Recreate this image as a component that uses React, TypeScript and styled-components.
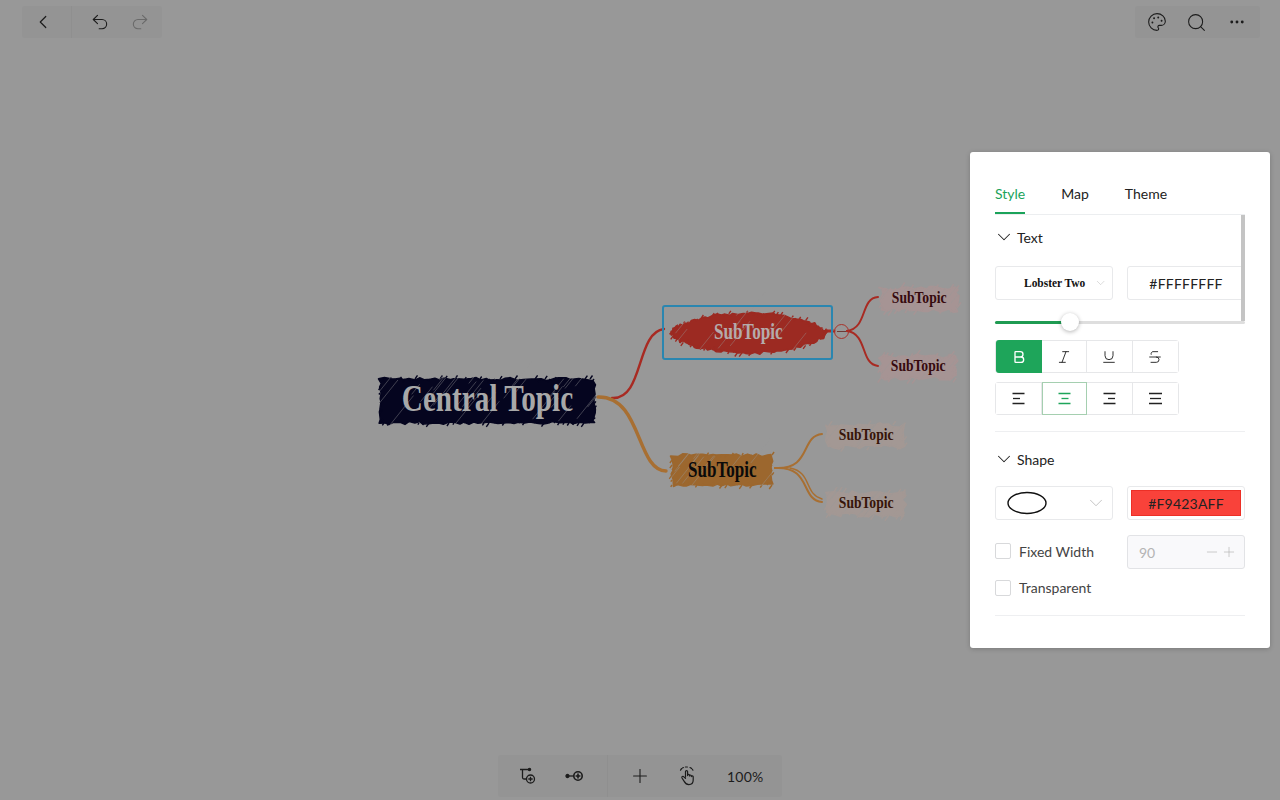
import { ReactNode } from "react";
import styled, { createGlobalStyle } from "styled-components";
import { ChevronDown, ChevronLeft, Ellipsis, Minus, Palette, Plus, Redo2, Search, Undo2, Bold, Italic, Underline, Strikethrough } from "lucide-react";

const GlobalStyle = createGlobalStyle`
  html, body { margin: 0; padding: 0; }
  body { font-family: "Lato", "Liberation Sans", sans-serif; color: #1c1c1c; }
`;

//#region canvas + bars
const Page = styled.div`
  position: relative;
  width: 1280px;
  height: 800px;
  overflow: hidden;
  background: #989898;
  display: flex;
  flex-direction: column;
  justify-content: space-between;
`;

const TopRow = styled.div`
  display: flex;
  justify-content: space-between;
  padding: 6px 20px 0 22px;
`;

const Bar = styled.div`
  display: flex;
  align-items: center;
  height: 32px;
  background: #949494;
  border-radius: 3px;
`;

const BarButton = styled.div<{ $w?: number; $dim?: boolean; $shift?: number }>`
  display: flex;
  align-items: center;
  justify-content: center;
  width: ${(p) => p.$w ?? 40}px;
  height: 100%;
  box-sizing: border-box;
  padding-right: ${(p) => p.$shift ?? 0}px;
  color: ${(p) => (p.$dim ? "#6a6a6a" : "#1c1c1c")};
`;

const BarSep = styled.div<{ $gap?: number }>`
  width: 1px;
  height: 100%;
  margin-left: ${(p) => p.$gap ?? 0}px;
  background: #8f8f8f;
`;

const BottomRow = styled.div`
  display: flex;
  justify-content: center;
  padding: 0 0 3px 0;
`;

const BottomBar = styled(Bar)`
  height: 42px;
  width: 284px;
  padding-left: 10px;
  box-sizing: border-box;
`;

const Zoom = styled.span`
  font-size: 14px;
  letter-spacing: 0.2px;
  color: #1c1c1c;
  margin-left: 23px;
`;
//#endregion

//#region map
const Links = styled.svg`
  position: absolute;
  left: 0;
  top: 0;
`;

const NodeBox = styled.div<{ $x: number; $y: number; $w: number; $h: number }>`
  position: absolute;
  left: ${(p) => p.$x}px;
  top: ${(p) => p.$y}px;
  width: ${(p) => p.$w}px;
  height: ${(p) => p.$h}px;
  display: flex;
  align-items: center;
  justify-content: center;
`;

const NodeFill = styled.svg`
  position: absolute;
  left: 0;
  top: 0;
  overflow: visible;
`;

const NodeLabel = styled.span<{ $size: number; $color: string; $lift: number; $squeeze: number }>`
  position: relative;
  top: ${(p) => p.$lift}px;
  transform: scaleX(${(p) => p.$squeeze});
  font-family: "Liberation Serif", serif;
  font-weight: 700;
  font-size: ${(p) => p.$size}px;
  color: ${(p) => p.$color};
  white-space: nowrap;
`;

const SelectBox = styled.div`
  position: absolute;
  left: 662px;
  top: 305px;
  width: 167px;
  height: 51px;
  border: 2px solid #2a86b0;
  border-radius: 3px;
`;

const Collapse = styled.div`
  position: absolute;
  left: 834px;
  top: 324px;
  width: 13px;
  height: 13px;
  border: 1px solid #a8322a;
  border-radius: 50%;
  display: flex;
  align-items: center;
  justify-content: center;
  &::after {
    content: "";
    width: 9px;
    height: 1px;
    background: #6e3a36;
  }
`;
//#endregion

//#region panel
const Panel = styled.div`
  position: absolute;
  left: 970px;
  top: 152px;
  width: 300px;
  height: 496px;
  box-sizing: border-box;
  background: #fff;
  border-radius: 3px;
  box-shadow: 0 1px 5px rgba(0, 0, 0, 0.2);
  padding: 29px 25px 0;
`;

const Tabs = styled.div`
  display: flex;
  gap: 36px;
  height: 33px;
  border-bottom: 1px solid #eceef0;
`;

const Tab = styled.div<{ $active?: boolean }>`
  font-size: 14px;
  line-height: 26px;
  height: 33px;
  box-sizing: border-box;
  color: ${(p) => (p.$active ? "#1ba35a" : "#222")};
  border-bottom: ${(p) => (p.$active ? "2px solid #1ba35a" : "none")};
`;

const Scroller = styled.div`
  position: relative;
  padding-top: 12px;
`;

const ScrollThumb = styled.div`
  position: absolute;
  right: 0;
  top: 0;
  width: 4px;
  height: 106px;
  background: #c4c4c4;
`;

const SectionHead = styled.div<{ $top?: number }>`
  display: flex;
  align-items: center;
  gap: 2px;
  height: 20px;
  margin: ${(p) => p.$top ?? 0}px 0 0 -2px;
  font-size: 14px;
  color: #222;
`;

const TwoCols = styled.div<{ $top: number }>`
  display: grid;
  grid-template-columns: 118px 118px;
  gap: 14px;
  align-items: center;
  margin-top: ${(p) => p.$top}px;
`;

const Field = styled.div<{ $off?: boolean }>`
  display: flex;
  align-items: center;
  justify-content: space-between;
  box-sizing: border-box;
  height: 34px;
  padding: 0 5px 0 11px;
  border: 1px solid ${(p) => (p.$off ? "#e2e3e6" : "#e8e9eb")};
  border-radius: 3px;
  background: ${(p) => (p.$off ? "#f9f9fb" : "#fff")};
  font-size: 14px;
  color: ${(p) => (p.$off ? "#b4b4b4" : "#222")};
`;

const FontName = styled.span`
  margin-left: 17px;
  font-family: "Liberation Serif", serif;
  font-weight: 700;
  font-size: 13px;
  color: #111;
  white-space: nowrap;
  transform: scaleX(0.88);
  transform-origin: left center;
`;

const ColorField = styled(Field)`
  justify-content: center;
  padding: 0;
  letter-spacing: 0.2px;
`;

const Swatch = styled.div<{ $color: string }>`
  display: flex;
  align-items: center;
  justify-content: center;
  width: 110px;
  height: 26px;
  box-sizing: border-box;
  background: ${(p) => p.$color};
  border: 1px solid #ec2f26;
  color: #222;
  letter-spacing: 0.2px;
`;

const Slider = styled.div`
  position: relative;
  height: 3px;
  margin-top: 21px;
  background: #dedede;
  border-radius: 2px;
`;

const SliderFill = styled.div`
  height: 100%;
  background: #1f9b52;
  border-radius: 2px;
`;

const SliderThumb = styled.div`
  position: absolute;
  top: -8px;
  width: 18px;
  height: 18px;
  margin-left: -9px;
  border-radius: 50%;
  background: #fff;
  box-shadow: 0 1px 4px rgba(0, 0, 0, 0.3);
`;

const BtnGroup = styled.div<{ $top: number }>`
  display: inline-flex;
  margin-top: ${(p) => p.$top}px;
  border: 1px solid #e6e7e9;
  border-radius: 3px;
  height: 31px;
  vertical-align: top;
`;

const GroupBtn = styled.div<{ $state?: "on" | "pick" }>`
  display: flex;
  align-items: center;
  justify-content: center;
  width: 45.5px;
  box-sizing: border-box;
  margin: ${(p) => (p.$state ? "-1px 0" : "0")};
  background: ${(p) => (p.$state === "on" ? "#1ea55a" : "#fff")};
  color: ${(p) => (p.$state === "on" ? "#fff" : p.$state === "pick" ? "#1ea55a" : "#222")};
  border: ${(p) => (p.$state === "pick" ? "1px solid #a5cfb0" : "none")};
  border-right: ${(p) => (p.$state === "on" ? "none" : p.$state === "pick" ? "1px solid #a5cfb0" : "1px solid #e6e7e9")};
  border-radius: ${(p) => (p.$state === "on" ? "3px 0 0 3px" : "0")};
  &:last-child {
    border-right: none;
  }
`;

const Stack = styled.div`
  display: flex;
  flex-direction: column;
  align-items: flex-start;
`;

const Divider = styled.div<{ $top: number }>`
  height: 1px;
  margin-top: ${(p) => p.$top}px;
  background: #eeeff1;
`;

const Check = styled.div<{ $top?: number }>`
  display: flex;
  align-items: center;
  gap: 8px;
  margin-top: ${(p) => p.$top ?? 0}px;
  font-size: 14px;
  color: #444;
`;

const Box = styled.div`
  width: 14px;
  height: 14px;
  border: 1px solid #d8d9db;
  border-radius: 2px;
`;

const Stepper = styled.div`
  display: flex;
  align-items: center;
  gap: 1px;
  padding-right: 2px;
  color: #b4b4b4;
`;
//#endregion

function rng(seed: number) {
  let s = seed;
  return () => {
    s = (s * 16807) % 2147483647;
    return s / 2147483647;
  };
}

// perimeter samples of the node, rect or blunt oval
function perimeter(w: number, h: number, oval: boolean) {
  const pts: [number, number][] = [];
  if (oval) {
    for (let i = 0; i < 110; i++) {
      const a = (i / 110) * Math.PI * 2;
      const sn = Math.sin(a);
      pts.push([w / 2 + Math.cos(a) * (w / 2 - 2), h / 2 + Math.sign(sn) * Math.pow(Math.abs(sn), 1.25) * (h / 2 - 1)]);
    }
    return pts;
  }
  const step = 5;
  for (let x = 3; x < w - 3; x += step) pts.push([x, 3]);
  for (let y = 3; y < h - 3; y += step) pts.push([w - 3, y]);
  for (let x = w - 3; x > 3; x -= step) pts.push([x, h - 3]);
  for (let y = h - 3; y > 3; y -= step) pts.push([3, y]);
  return pts;
}

function outline(w: number, h: number, oval: boolean, seed: number, rough: number) {
  const r = rng(seed);
  const pts = perimeter(w, h, oval).map(([x, y]) => `${(x + (r() - 0.5) * 3 * rough).toFixed(1)} ${(y + (r() - 0.5) * 3 * rough).toFixed(1)}`);
  return "M" + pts.join("L") + "Z";
}

// short pen strokes poking out past the edge, uneven on purpose
function fringe(w: number, h: number, oval: boolean, seed: number, rough: number) {
  const r = rng(seed + 3);
  let d = "";
  perimeter(w, h, oval).forEach(([x, y]) => {
    if (r() < 0.35) return;
    const len = (1.5 + r() * 2.5) * rough;
    const side = r() > 0.5 ? 1 : -1;
    d += `M${x.toFixed(1)} ${y.toFixed(1)}l${(side * len * 0.7).toFixed(1)} ${(-side * len).toFixed(1)}`;
  });
  return d;
}

function hatch(w: number, h: number, seed: number, n: number) {
  const r = rng(seed + 7);
  let d = "";
  for (let i = 0; i < n; i++) {
    const x = r() * w;
    const y = r() * h;
    const len = 8 + r() * 22;
    d += `M${x.toFixed(1)} ${y.toFixed(1)}l${(len * 0.8).toFixed(1)} ${(-len).toFixed(1)}`;
  }
  return d;
}

type NodeProps = {
  x: number;
  y: number;
  w: number;
  h: number;
  fill: string;
  color: string;
  size: number;
  seed: number;
  oval?: boolean;
  lines?: number;
  lift?: number;
  squeeze?: number;
  rough?: number;
  children: ReactNode;
};

function TopicNode({ x, y, w, h, fill, color, size, seed, oval, lines = 10, lift = 0, squeeze = 0.8, rough = 1, children }: NodeProps) {
  return (
    <NodeBox $x={x} $y={y} $w={w} $h={h}>
      <NodeFill width={w} height={h}>
        <path d={outline(w, h, !!oval, seed, rough)} fill={fill} stroke={fill} strokeWidth={1.5} strokeLinejoin="round" />
        <path d={fringe(w, h, !!oval, seed, rough)} stroke={fill} strokeWidth={1.4} fill="none" />
        <path d={hatch(w, h, seed, lines)} stroke="#989898" strokeOpacity={0.5} strokeWidth={0.8} fill="none" />
      </NodeFill>
      <NodeLabel $size={size} $color={color} $lift={lift} $squeeze={squeeze}>
        {children}
      </NodeLabel>
    </NodeBox>
  );
}

const Line = ({ d, color, w }: { d: string; color: string; w: number }) => <path d={d} stroke={color} strokeWidth={w} fill="none" strokeLinecap="round" />;

function BranchLinks() {
  const red = "#a82a22";
  const org = "#a86f32";
  return (
    <Links width={1280} height={800}>
      <Line d="M612 398C644 400 636 332 664 329" color={red} w={2.4} />
      <Line d="M598 397C642 396 636 470 666 471" color={org} w={3.4} />
      <Line d="M826 331H834" color={red} w={3} />
      <Line d="M847 331C868 328 860 298 878 297" color={red} w={2} />
      <Line d="M847 331C868 334 860 364 878 366" color={red} w={2} />
      <Line d="M775 468C812 470 800 436 822 434" color={org} w={2} />
      <Line d="M775 468C812 466 800 500 822 502" color={org} w={2} />
      <Line d="M790 468C812 472 804 494 822 499" color={org} w={1.4} />
    </Links>
  );
}

const Ic = styled.svg`
  display: block;
`;

function AddChildIcon() {
  return (
    <Ic width="18" height="18" viewBox="0 0 18 18" fill="none" stroke="currentColor" strokeWidth="1.3">
      <path d="M1 2.5H10M3.5 2.5V10.5C3.5 11.5 4 12 5 12H7.5" />
      <circle cx="10.5" cy="2.5" r="1.1" fill="currentColor" />
      <circle cx="11.5" cy="12" r="4" />
      <path d="M9.3 12H13.7M11.5 9.8V14.2" />
    </Ic>
  );
}

function AddSiblingIcon() {
  return (
    <Ic width="20" height="18" viewBox="0 0 20 18" fill="none" stroke="currentColor" strokeWidth="1.3">
      <circle cx="2.5" cy="9" r="1.5" fill="currentColor" />
      <path d="M3 9H9" />
      <circle cx="13" cy="9" r="4.2" strokeWidth="1.6" />
      <path d="M10.6 9H15.4M13 6.6V11.4" strokeWidth="1.6" />
    </Ic>
  );
}

function HandIcon() {
  return (
    <Ic width="20" height="20" viewBox="0 0 20 20" fill="none" stroke="currentColor" strokeWidth="1.2" strokeLinecap="round" strokeLinejoin="round">
      <path d="M7.5 11V5.6C7.5 4.2 9.6 4.2 9.6 5.6V9.6M9.6 9.2C9.6 8 11.5 8 11.5 9.2V10M11.5 9.8C11.5 8.7 13.3 8.7 13.3 9.9V10.6M13.3 10.4C13.3 9.4 15.2 9.5 15.2 10.8V14C15.2 17 13.2 18.6 10.8 18.6C8.6 18.6 7.4 17.6 6.2 15.4L4 12C3.3 10.8 4.9 9.7 5.9 10.8L7.5 12.4" />
      <path d="M2.5 4.2C3.2 2.9 4.2 2 5.4 1.5M12 1.5C13.2 2 14.2 2.9 14.9 4.2M7.4 1H9.8" strokeDasharray="2 1.2" />
    </Ic>
  );
}

function AlignIcon({ kind }: { kind: "left" | "center" | "right" | "justify" }) {
  const mid = { left: "M3 8.5H10", center: "M5.5 8.5H12.5", right: "M7 8.5H14", justify: "M3 8.5H14" }[kind];
  const rows = kind === "justify" ? "M2 3.5H15M2 13.5H15" : "M2.5 3.5H14.5M2.5 13.5H14.5";
  return (
    <Ic width="17" height="17" viewBox="0 0 17 17" fill="none" stroke="currentColor" strokeWidth="1.3">
      <path d={rows} />
      <path d={mid} />
    </Ic>
  );
}

export default function App() {
  return (
    <Page>
      <GlobalStyle />
      <TopRow>
        <Bar>
          <BarButton $w={49} $shift={8}>
            <ChevronLeft size={22} strokeWidth={1.3} />
          </BarButton>
          <BarSep />
          <BarButton $w={56}>
            <Undo2 size={20} strokeWidth={1.3} />
          </BarButton>
          <BarButton $w={24} $dim>
            <Redo2 size={20} strokeWidth={1.3} />
          </BarButton>
          <BarButton $w={10} />
        </Bar>
        <Bar>
          <BarButton $w={43}>
            <Palette size={20} strokeWidth={1.3} />
          </BarButton>
          <BarButton $w={36}>
            <Search size={21} strokeWidth={1.2} />
          </BarButton>
          <BarButton $w={46}>
            <Ellipsis size={18} strokeWidth={1.8} />
          </BarButton>
        </Bar>
      </TopRow>

      <BranchLinks />
      <TopicNode x={377} y={376} w={220} h={50} fill="#05051f" color="#a8a8a8" size={37} seed={11} lines={34} lift={-3} squeeze={0.79}>
        Central Topic
      </TopicNode>
      <TopicNode x={669} y={312} w={159} h={42} fill="#9c2a22" color="#b5abab" size={23} seed={23} oval lines={16} lift={-1} squeeze={0.74}>
        SubTopic
      </TopicNode>
      <TopicNode x={669} y={452} w={106} h={36} fill="#9c672e" color="#0a0a0a" size={23} seed={37} lines={12} squeeze={0.74}>
        SubTopic
      </TopicNode>
      <TopicNode x={878} y={285} w={82} h={28} fill="#a69494" color="#360a0e" size={17} seed={41} lines={12} lift={-1} rough={1.5}>
        SubTopic
      </TopicNode>
      <TopicNode x={878} y={353} w={81} h={28} fill="#a69494" color="#360a0e" size={17} seed={53} lines={12} lift={-1} rough={1.5}>
        SubTopic
      </TopicNode>
      <TopicNode x={825} y={422} w={82} h={28} fill="#a39894" color="#361408" size={17} seed={67} lines={12} lift={-1} rough={1.5}>
        SubTopic
      </TopicNode>
      <TopicNode x={825} y={490} w={82} h={28} fill="#a39894" color="#361408" size={17} seed={79} lines={12} lift={-1} rough={1.5}>
        SubTopic
      </TopicNode>
      <SelectBox />
      <Collapse />

      <BottomRow>
        <BottomBar>
          <BarButton $w={40}>
            <AddChildIcon />
          </BarButton>
          <BarButton $w={54}>
            <AddSiblingIcon />
          </BarButton>
          <BarSep $gap={5} />
          <BarButton $w={64}>
            <Plus size={22} strokeWidth={1.2} />
          </BarButton>
          <BarButton $w={32}>
            <HandIcon />
          </BarButton>
          <Zoom>100%</Zoom>
        </BottomBar>
      </BottomRow>

      <Panel>
        <Tabs>
          <Tab $active>Style</Tab>
          <Tab>Map</Tab>
          <Tab>Theme</Tab>
        </Tabs>
        <Scroller>
          <ScrollThumb />
          <SectionHead>
            <ChevronDown size={22} strokeWidth={1.1} />
            Text
          </SectionHead>
          <TwoCols $top={19}>
            <Field>
              <FontName>Lobster Two</FontName>
              <ChevronDown size={22} strokeWidth={0.8} color="#b0b0b0" />
            </Field>
            <ColorField>#FFFFFFFF</ColorField>
          </TwoCols>
          <Slider>
            <SliderFill style={{ width: "30%" }} />
            <SliderThumb style={{ left: "30%" }} />
          </Slider>
          <Stack>
            <BtnGroup $top={16}>
              <GroupBtn $state="on">
                <Bold size={16} strokeWidth={2} />
              </GroupBtn>
              <GroupBtn>
                <Italic size={16} strokeWidth={1.4} />
              </GroupBtn>
              <GroupBtn>
                <Underline size={16} strokeWidth={1.4} />
              </GroupBtn>
              <GroupBtn>
                <Strikethrough size={16} strokeWidth={1.4} />
              </GroupBtn>
            </BtnGroup>
            <BtnGroup $top={9}>
              <GroupBtn>
                <AlignIcon kind="left" />
              </GroupBtn>
              <GroupBtn $state="pick">
                <AlignIcon kind="center" />
              </GroupBtn>
              <GroupBtn>
                <AlignIcon kind="right" />
              </GroupBtn>
              <GroupBtn>
                <AlignIcon kind="justify" />
              </GroupBtn>
            </BtnGroup>
          </Stack>
          <Divider $top={16} />
          <SectionHead $top={17}>
            <ChevronDown size={22} strokeWidth={1.1} />
            Shape
          </SectionHead>
          <TwoCols $top={17}>
            <Field>
              <svg width="40" height="24" viewBox="0 0 40 24">
                <ellipse cx="20" cy="12" rx="19" ry="10.5" fill="#fff" stroke="#111" strokeWidth="1.4" />
              </svg>
              <ChevronDown size={22} strokeWidth={0.8} color="#b0b0b0" />
            </Field>
            <ColorField>
              <Swatch $color="#f9423a">#F9423AFF</Swatch>
            </ColorField>
          </TwoCols>
          <TwoCols $top={15}>
            <Check $top={-2}>
              <Box />
              Fixed Width
            </Check>
            <Field $off>
              90
              <Stepper>
                <Minus size={16} strokeWidth={1} />
                <Plus size={16} strokeWidth={1} />
              </Stepper>
            </Field>
          </TwoCols>
          <Check $top={10}>
            <Box />
            Transparent
          </Check>
          <Divider $top={19} />
        </Scroller>
      </Panel>
    </Page>
  );
}
